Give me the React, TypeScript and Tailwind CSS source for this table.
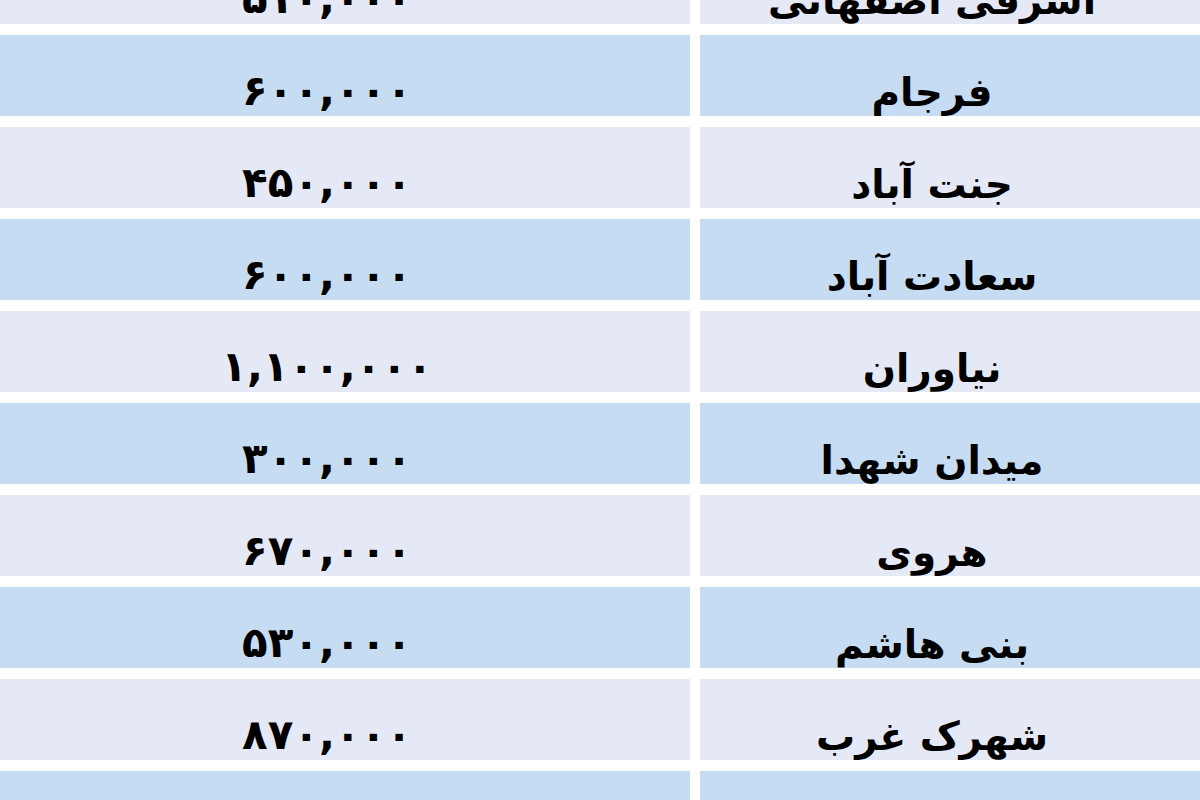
import React from "react";

const rows: { price: string; name: string }[] = [
  { price: "۵۱۰,۰۰۰", name: "اشرفی اصفهانی" },
  { price: "۶۰۰,۰۰۰", name: "فرجام" },
  { price: "۴۵۰,۰۰۰", name: "جنت آباد" },
  { price: "۶۰۰,۰۰۰", name: "سعادت آباد" },
  { price: "۱,۱۰۰,۰۰۰", name: "نیاوران" },
  { price: "۳۰۰,۰۰۰", name: "میدان شهدا" },
  { price: "۶۷۰,۰۰۰", name: "هروی" },
  { price: "۵۳۰,۰۰۰", name: "بنی هاشم" },
  { price: "۸۷۰,۰۰۰", name: "شهرک غرب" },
  { price: "۵۰۰,۰۰۰", name: "پونک" },
];

export default function App() {
  return (
    <div className="w-[1200px] h-[800px] overflow-hidden bg-white">
      <div
        className="mt-[-57px] flex flex-col gap-[11px] font-bold text-black"
        style={{ fontFamily: '"DejaVu Sans", "Noto Sans", sans-serif' }}
      >
        {rows.map((r, i) => {
          const bg = i % 2 === 1 ? "bg-[#c6dcf2]" : "bg-[#e5e9f5]";
          return (
            <div key={i} className="grid grid-cols-[690px_500px] gap-[10px] h-[81px]">
              <div className={`${bg} flex items-center justify-center pr-[36px] pt-[30px] text-[42px] tracking-[8px] leading-none`}>
                <span dir="ltr">{r.price}</span>
              </div>
              <div className={`${bg} flex items-center justify-center pr-[36px] pt-[34px] text-[39px] leading-none`}>
                <span dir="rtl">{r.name}</span>
              </div>
            </div>
          );
        })}
      </div>
    </div>
  );
}
